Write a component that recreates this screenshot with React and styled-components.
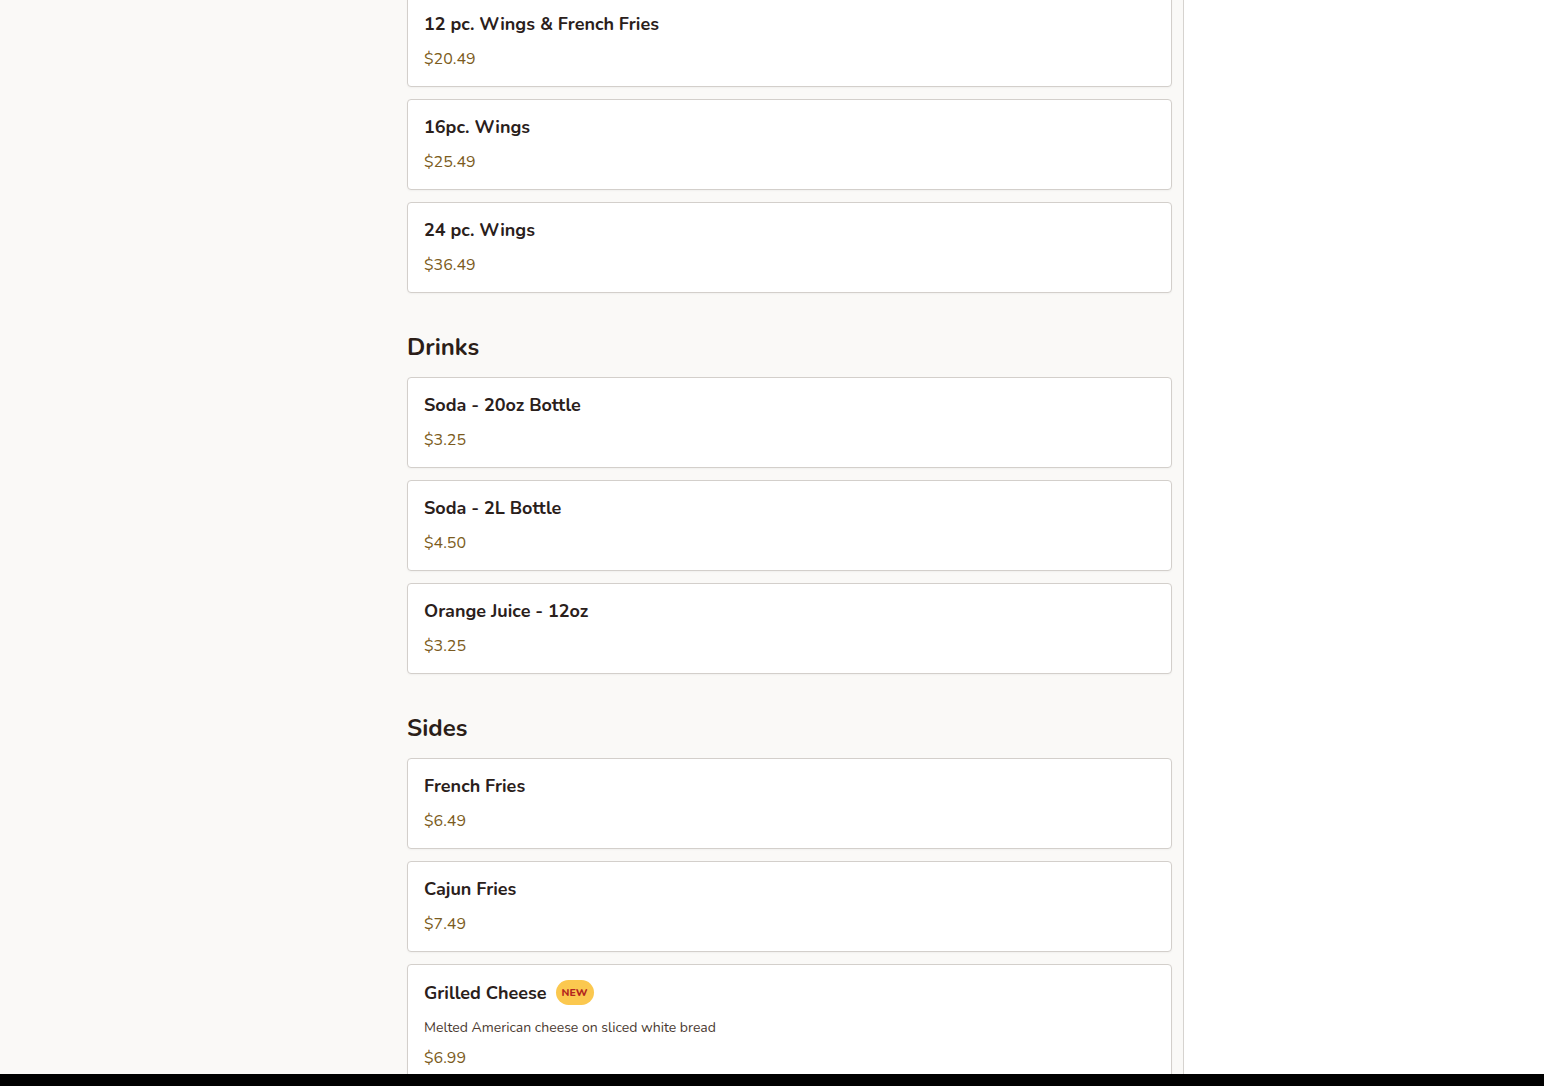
import React from 'react';
import styled, { createGlobalStyle } from 'styled-components';

const GlobalStyle = createGlobalStyle`
  html, body {
    margin: 0;
    padding: 0;
    background: #faf9f7;
    font-family: "Nunito", Lato, "Noto Sans", sans-serif;
    overflow: hidden;
  }
`;

const menu = [
  {
    title: null,
    items: [
      { name: '12 pc. Wings & French Fries', price: '$20.49' },
      { name: '16pc. Wings', price: '$25.49' },
      { name: '24 pc. Wings', price: '$36.49' },
    ],
  },
  {
    title: 'Drinks',
    items: [
      { name: 'Soda - 20oz Bottle', price: '$3.25' },
      { name: 'Soda - 2L Bottle', price: '$4.50' },
      { name: 'Orange Juice - 12oz', price: '$3.25' },
    ],
  },
  {
    title: 'Sides',
    items: [
      { name: 'French Fries', price: '$6.49' },
      { name: 'Cajun Fries', price: '$7.49' },
      {
        name: 'Grilled Cheese',
        price: '$6.99',
        isNew: true,
        description: 'Melted American cheese on sliced white bread',
      },
    ],
  },
];

const Page = styled.div`
  display: grid;
  grid-template-columns: 1184px 1fr;
  height: 1086px;
`;

const Main = styled.main`
  border-right: 1px solid #d6d3cf;
  background: #faf9f7;
  padding-right: 11px;
  overflow: hidden;
`;

const Side = styled.aside`
  background: #ffffff;
`;

const Content = styled.div`
  width: 765px;
  margin-left: auto;
  margin-top: -4px;
  display: flex;
  flex-direction: column;
  gap: 39px;
`;

const Section = styled.section`
  display: flex;
  flex-direction: column;
`;

const Heading = styled.h2`
  margin: 0 0 15px;
  font-size: 24px;
  line-height: 30px;
  font-weight: 700;
  color: #2b1e18;
`;

const List = styled.div`
  display: flex;
  flex-direction: column;
  gap: 12px;
`;

const Card = styled.div`
  background: #fff;
  border: 1px solid #d3cfcb;
  border-radius: 4px;
  box-shadow: 0 1px 2px rgba(0, 0, 0, 0.04);
  padding: 15px 16px;
  display: flex;
  flex-direction: column;
`;

const TitleRow = styled.div`
  display: flex;
  align-items: center;
  gap: 9px;
  margin-bottom: ${p => (p.$withDesc ? '13px' : '11px')};
`;

const Name = styled.div`
  font-size: 18px;
  line-height: 24px;
  font-weight: 700;
  color: #2a201b;
`;

const Badge = styled.span`
  background: #fbc84f;
  color: #b3261e;
  font-size: 10.5px;
  font-weight: 800;
  line-height: 25px;
  padding: 0 6px;
  border-radius: 13px;
`;

const Description = styled.div`
  font-size: 14px;
  line-height: 20px;
  color: #4a3a31;
  margin-bottom: 8px;
`;

const Price = styled.div`
  font-size: 16px;
  line-height: 24px;
  color: #7b5b20;
`;

const BottomBar = styled.div`
  position: fixed;
  left: 0;
  right: 0;
  bottom: 0;
  height: 12px;
  background: #000;
`;

function MenuCard({ item }) {
  return (
    <Card>
      <TitleRow $withDesc={!!item.description}>
        <Name>{item.name}</Name>
        {item.isNew && <Badge>NEW</Badge>}
      </TitleRow>
      {item.description && <Description>{item.description}</Description>}
      <Price>{item.price}</Price>
    </Card>
  );
}

export default function App() {
  return (
    <>
      <GlobalStyle />
      <Page>
        <Main>
          <Content>
            {menu.map((section, i) => (
              <Section key={i}>
                {section.title && <Heading>{section.title}</Heading>}
                <List>
                  {section.items.map(item => (
                    <MenuCard key={item.name} item={item} />
                  ))}
                </List>
              </Section>
            ))}
          </Content>
        </Main>
        <Side />
      </Page>
      <BottomBar />
    </>
  );
}
